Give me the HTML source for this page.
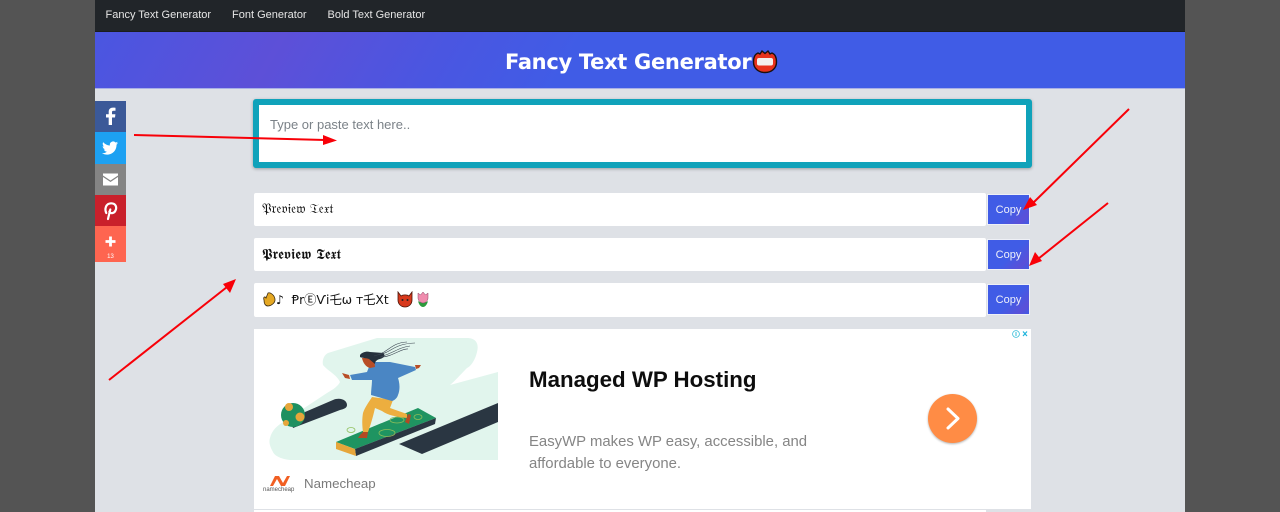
<!DOCTYPE html>
<html lang="en"><head><meta charset="utf-8"><title>Fancy Text Generator</title>
<style>
html,body{margin:0;padding:0;width:1280px;height:512px;overflow:hidden;background:#545454;font-family:"Liberation Sans",sans-serif}
#page{position:absolute;left:95px;top:0;width:1090px;height:512px;background:#dee1e6;overflow:hidden}
#nav{position:absolute;left:0;top:0;width:1090px;height:31px;background:#212529;border-bottom:1px solid #1a1d20}
#nav span{position:absolute;top:7.5px;font-size:11px;line-height:14px;color:#e6e6e6;white-space:nowrap}
#hdr{position:absolute;left:0;top:32px;width:1090px;height:56px;border-bottom:1px solid #a9b0e6;background:linear-gradient(120deg,#4a56e1 0%,#5d50d8 17%,#4a56e1 32%,#405ce6 44%,#405ce6 100%)}
#hdr div{position:absolute;left:410px;top:14px;font-family:"DejaVu Sans",sans-serif;font-weight:bold;font-size:21px;line-height:32px;color:#fff;letter-spacing:-.3px;white-space:nowrap}
.soc{position:absolute;left:0;width:31px}
#box{position:absolute;left:158px;top:99px;width:767px;height:57px;border:6px solid #10a2ba;border-radius:3px;background:#fff;box-shadow:0 1px 3px rgba(0,0,0,.3)}
#box span{position:absolute;left:11px;top:11px;font-size:13px;line-height:17px;color:#7b8288}
.row{position:absolute;left:159px;width:732px;height:33px;background:#fff;border-radius:2px}
.row span{position:absolute;left:8px;top:8px;font-family:"DejaVu Serif","DejaVu Sans",serif;font-size:13.600px;line-height:17px;color:#111;white-space:nowrap}
.btn{position:absolute;left:892px;width:41px;height:29px;background:linear-gradient(135deg,#405ce6 0%,#405ce6 55%,#5a50d8 85%,#4159e4 100%);border:1px solid #eef0f6;font-size:11px;line-height:30px;text-align:center;color:#eef0fa}
#ad{position:absolute;left:159px;top:329px;width:777px;height:180px;background:#fff}
#line{position:absolute;left:159px;top:510px;width:732px;height:2px;background:#fff}
</style></head><body>
<div id="page">
<div id="nav"><span style="left:10.5px">Fancy Text Generator</span><span style="left:137px">Font Generator</span><span style="left:232.5px">Bold Text Generator</span></div>
<div id="hdr"><div>Fancy Text Generator</div>
<svg style="position:absolute;left:657px;top:17px" width="26" height="25" viewBox="0 0 26 25"><path d="M1.500 13C1.500 8 3.500 5 6 4L8 5 10 2 13 4.500 16 2 18 5 20 4C22.500 5 24.500 8 24.500 13 24.500 19 20 23.500 13 23.500 6 23.500 1.500 19 1.500 13Z" fill="#e8321c" stroke="#1a1010" stroke-width="1.400"/><rect x="5" y="9" width="16" height="7.500" rx="2" fill="#f4f1ee"/></svg></div>

<div class="soc" style="top:101px;height:31px;background:#3b5998"><svg width="31" height="31" viewBox="0 0 31 31"><path d="M17 24V16.500H20L20.400 13.200H17V11.300C17 10.300 17.300 9.700 18.600 9.700H20.500V6.800C20 6.700 19 6.600 17.900 6.600 15.400 6.600 13.700 8.100 13.700 10.800V13.200H11V16.500H13.700V24Z" fill="#fff"/></svg></div>
<div class="soc" style="top:132px;height:32px;background:#1da1f2"><svg width="31" height="32" viewBox="0 0 31 32"><path d="M23 11C22.400 11.300 21.800 11.400 21.200 11.500 21.900 11.100 22.400 10.500 22.600 9.700 22 10.100 21.300 10.300 20.500 10.500A3.300 3.300 0 0 0 14.900 13.500C12.200 13.400 9.800 12.100 8.200 10.100 7.300 11.600 7.800 13.500 9.200 14.500 8.700 14.500 8.200 14.300 7.700 14.100 7.700 15.700 8.800 17 10.300 17.300 9.800 17.500 9.300 17.500 8.800 17.400 9.200 18.700 10.400 19.600 11.900 19.700 10.500 20.800 8.700 21.300 7 21.100 8.500 22.100 10.200 22.600 12 22.600 18.200 22.600 21.700 17.400 21.500 12.700 22.100 12.200 22.600 11.700 23 11Z" fill="#fff"/></svg></div>
<div class="soc" style="top:164px;height:31px;background:#848484"><svg width="31" height="31" viewBox="0 0 31 31"><path d="M8 9.500H23V11.500L15.500 16.500 8 11.500Z" fill="#fff"/><path d="M8 13 15.500 18 23 13V21.500H8Z" fill="#fff"/></svg></div>
<div class="soc" style="top:195px;height:31px;background:#c9202b"><svg width="31" height="31" viewBox="0 0 31 31"><path d="M13 24 15.300 14.500M11.300 18C9.500 14.500 10.500 8.500 16 8.300 21 8.200 22 12.500 20.500 15.500 19 18.800 15 18.800 14.400 16.500" fill="none" stroke="#fff" stroke-width="2.200" stroke-linecap="round"/></svg></div>
<div class="soc" style="top:226px;height:36px;background:#fe6550"><svg width="31" height="36" viewBox="0 0 31 36"><path d="M15.500 10.500V20.500M10.500 15.500H20.500" stroke="#fff" stroke-width="2.800"/></svg><div style="position:absolute;left:0;top:27px;width:31px;text-align:center;font-size:6px;line-height:8px;color:#fff">13</div></div>

<div id="box"><span>Type or paste text here..</span></div>

<div class="row" style="top:193px"><span>𝔓𝔯𝔢𝔳𝔦𝔢𝔴 𝔗𝔢𝔵𝔱</span></div>
<div class="btn" style="top:194px">Copy</div>
<div class="row" style="top:238px"><span style="font-size:14.500px;top:9px">𝕻𝖗𝖊𝖛𝖎𝖊𝖜 𝕿𝖊𝖝𝖙</span></div>
<div class="btn" style="top:239px">Copy</div>
<div class="row" style="top:283px;height:34px"><span style="font-family:'DejaVu Sans',sans-serif;font-size:12.300px;left:8px;top:9px"><svg width="14" height="15" viewBox="0 0 14 15" style="vertical-align:-3px"><path d="M2 8C1 5 3 4 4 6L6 1C8 0 13 3 13 8 13 11 9 14 6 14 3 14 2 11 2 8Z" fill="#e5a823" stroke="#3a2a10" stroke-width=".8"/></svg>♪&nbsp; ⱣrⒺѴі乇ω ᴛ乇Xt</span>
<svg style="position:absolute;left:143px;top:8px" width="34" height="17" viewBox="0 0 34 17"><path d="M1 1 4 5C6 3.500 10 3.500 12 5L15 1 15 9C15 13 12 16 8 16 4 16 1 13 1 9Z" fill="#d8391c" stroke="#4a1408" stroke-width=".8"/><circle cx="5.500" cy="9" r="1" fill="#222"/><circle cx="10.500" cy="9" r="1" fill="#222"/><path d="M21 10C23 12 29 12 31 10 30 14 28 16 26 16 24 16 22 14 21 10Z" fill="#2c9a3c"/><path d="M21 2 23.500 4 26 1 28.500 4 31 2 31 7C31 10 28 12 26 12 24 12 21 10 21 7Z" fill="#f08cae" stroke="#8a4060" stroke-width=".5"/></svg></div>
<div class="btn" style="top:284px;line-height:31px">Copy</div>

<div id="ad">
<svg style="position:absolute;left:8px;top:8px" width="236" height="124" viewBox="0 0 236 124">
<path d="M66 16 115 1H205C215 1 217 8 215 15 213 24 208 30 205 31 198 38 193 44 188 48L236 35V123H28C18 122 12 118 11 115 7 108 7 104 8 101 10 93 15 89 21 85L65 56C72 52 76 49 78 45 75 38 66 34 61 28 60 23 62 18 66 16Z" fill="#e1f5ed"/>
<path d="M43 75 71 63C78 60 85 63 85 68 85 71 82 72 78 73L31 91 30 88Z" fill="#2a3642"/>
<circle cx="31" cy="78" r="12" fill="#1e9060"/><circle cx="27" cy="70" r="4" fill="#e6a63a"/><circle cx="38" cy="80" r="4.500" fill="#e6a63a"/><circle cx="24" cy="86" r="3" fill="#e6a63a"/>
<path d="M74 105 156 71 174 81 93 112Z" fill="#1f9461"/><path d="M93 112 174 81 173 87 94 119Z" fill="#2a3642"/><path d="M74 105 93 112 94 119 74 112Z" fill="#e6a63a"/>
<path d="M137 107 236 66V85L160 117Z" fill="#2a3642"/>
<g fill="none" stroke="#8fbf5a" stroke-width=".8"><ellipse cx="89" cy="93" rx="4" ry="2.500"/><ellipse cx="125" cy="96" rx="8" ry="3.500"/><ellipse cx="135" cy="83" rx="7" ry="3"/><ellipse cx="156" cy="80" rx="4" ry="2.500"/></g>
<path d="M110 60 131 63 128 71 145 77 145 81C135 80 125 78 120 74L113 71C111 80 108 90 106 95H101C100 88 100 82 101 76 103 70 107 65 110 60Z" fill="#ecae3f"/>
<path d="M146 77 149 78 147 87 143 85 145 80ZM101 95 106 95 105 101 96 101 98 98Z" fill="#b34a24"/>
<path d="M88 38 105 35C107 30 108 27 111 25H128L153 30 154 33 136 41C138 47 138 53 136 58 135 61 133 63 130 64L109 58C109 53 110 48 110 43L90 43Z" fill="#4a86c4"/>
<path d="M100 21H112L113 30 108 31C104 30 101 26 100 21Z" fill="#b84d26"/>
<path d="M98 18C100 15 105 14 108 15L121 16C124 18 122 21 118 22 114 23 113 25 113 27L107 22C104 21 100 21 98 20Z" fill="#25303c"/>
<g fill="none" stroke="#3a4450" stroke-width=".6"><path d="M115 18C130 16 130 7 153 6M118 20C134 15 135 11 148 9M112 19C128 15 128 6 145 5M119 20C130 20 140 11 146 12"/></g>
<path d="M80 36 87 38 88 42 83 41ZM153 28 159 28 157 31 154 32Z" fill="#b84d26"/>
</svg>
<svg style="position:absolute;left:10px;top:145px" width="32" height="16" viewBox="0 0 32 16"><path d="M6 12 11 2H15L19 9 23 2H26L21 12H17L13 5 9 12Z" fill="#f15f22"/></svg>
<div style="position:absolute;left:9px;top:158px;width:34px;font-size:6px;line-height:7px;color:#555;white-space:nowrap">namecheap</div>
<div style="position:absolute;left:50px;top:146px;font-size:13.300px;line-height:17px;color:#7a7a7a;white-space:nowrap">Namecheap</div>
<div style="position:absolute;left:275px;top:37px;font-size:22.300px;font-weight:bold;line-height:28px;color:#0d0d0d;white-space:nowrap">Managed WP Hosting</div>
<div style="position:absolute;left:275px;top:102px;font-size:14.900px;line-height:22px;color:#858585;white-space:nowrap">EasyWP makes WP easy, accessible, and<br>affordable to everyone.</div>
<div style="position:absolute;left:674px;top:65px;width:49px;height:49px;border-radius:50%;background:#ff8c45;box-shadow:0 1px 2px rgba(0,0,0,.3)"><svg width="49" height="49" viewBox="0 0 49 49"><path d="M20 15 30 24.500 20 34" fill="none" stroke="#fff" stroke-width="3" stroke-linecap="round" stroke-linejoin="round"/></svg></div>
<svg style="position:absolute;left:757px;top:0" width="20" height="10" viewBox="0 0 20 10"><circle cx="5" cy="5" r="3.400" fill="none" stroke="#35bdd8" stroke-width=".8"/><path d="M5 3V7" stroke="#35bdd8"/><path d="M12 2.500 16 7M16 2.500 12 7" stroke="#1eb4dc" stroke-width="1.200"/></svg>
</div>
<div id="line"></div>
</div>

<svg style="position:absolute;left:0;top:0" width="1280" height="512" viewBox="0 0 1280 512">
<g stroke="#f80008" stroke-width="2" fill="#f80008">
<path d="M134 135 325 140" fill="none"/><path d="M337 140.500 323 135 323 145Z" stroke="none"/>
<path d="M1129 109 1033 203" fill="none"/><path d="M1023 210 1030 197 1037 205Z" stroke="none"/>
<path d="M1108 203 1038 259" fill="none"/><path d="M1029 266 1035 252 1042 261Z" stroke="none"/>
<path d="M109 380 227 287" fill="none"/><path d="M236 279 223 284 230 293Z" stroke="none"/>
</g></svg>
</body></html>
